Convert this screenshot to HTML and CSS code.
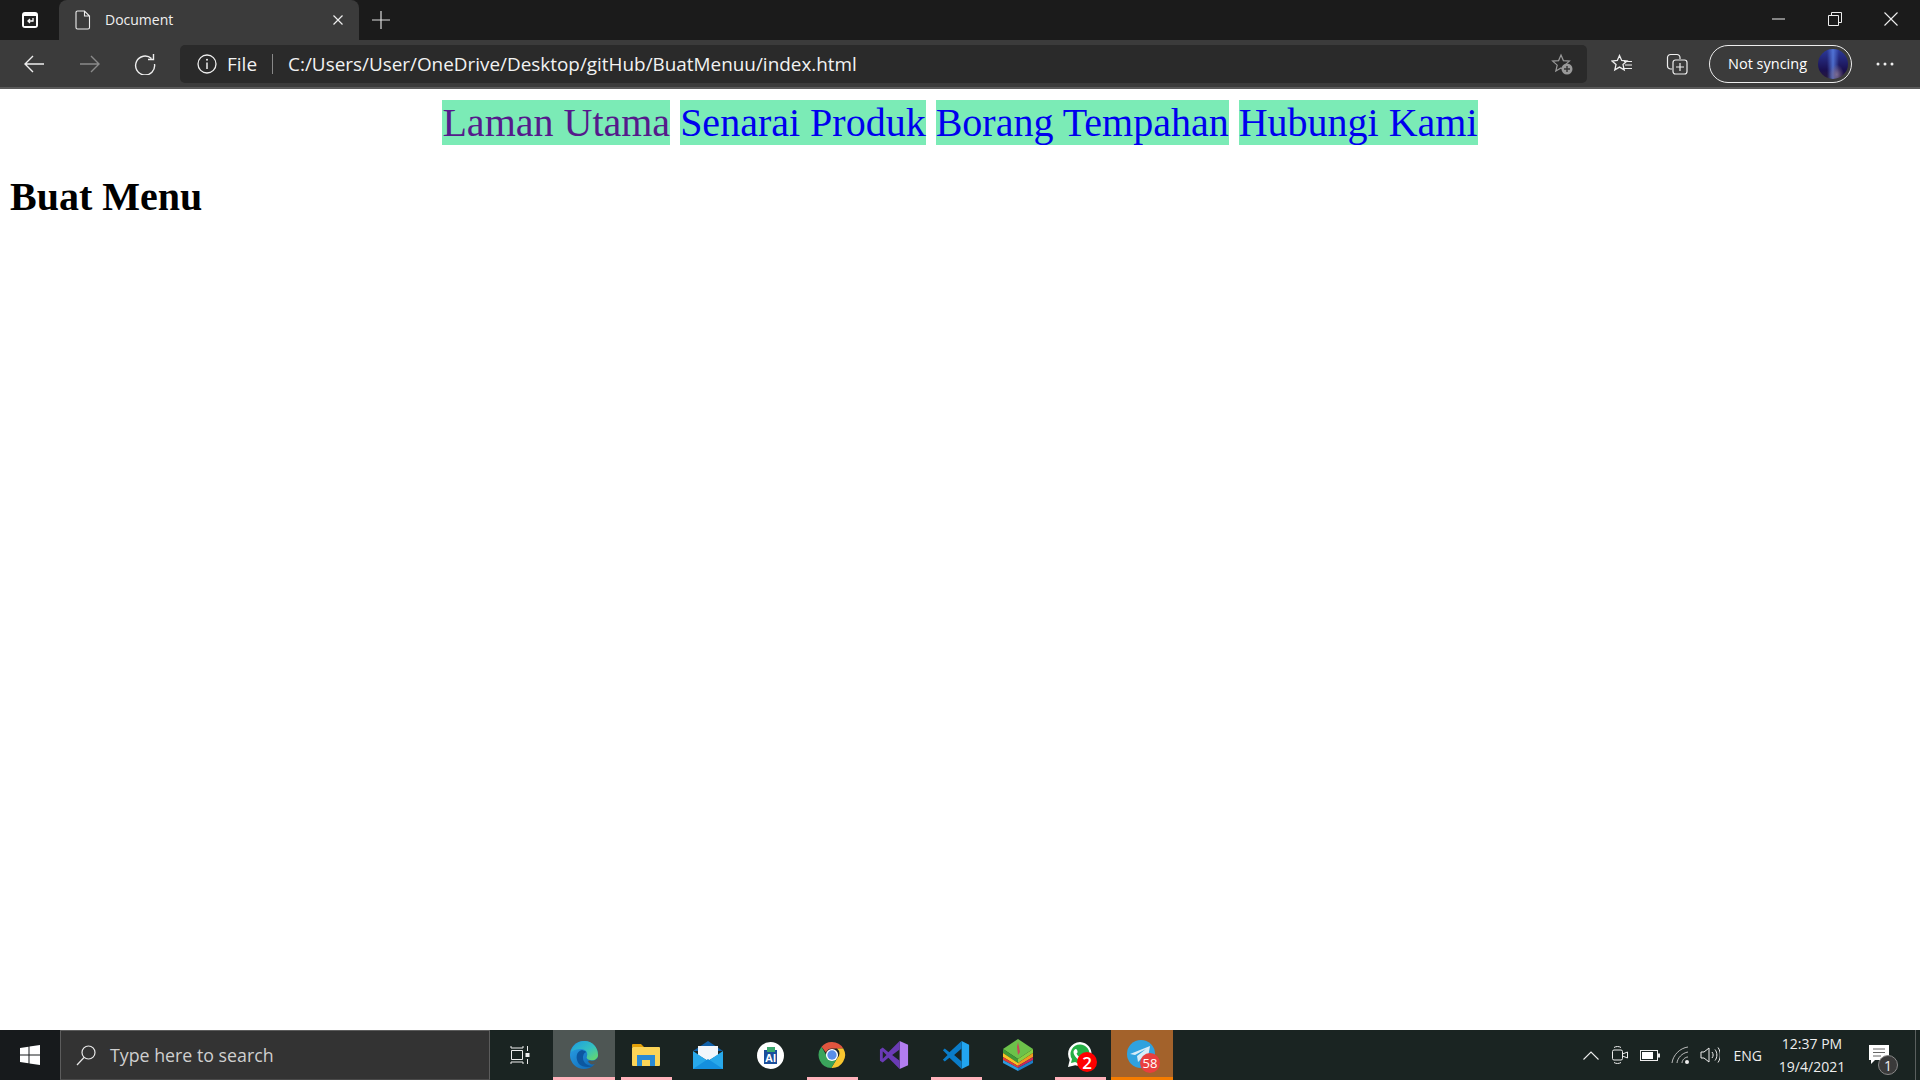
FILE: index.html
```html
<!DOCTYPE html>
<html>
<head>
    <title>Document</title>
    <link rel="stylesheet" href="styles.css">
</head>
<body>
    <div class="browser">
        <div class="tabstrip">
            <div class="tab-actions">
                <svg width="20" height="20" viewBox="0 0 20 20"><rect x="2" y="2" width="16" height="16" rx="3" fill="#fff"/><rect x="4" y="6" width="12" height="10" fill="#222"/><path d="M13 8v3H8M10 9l-2 2 2 2" fill="none" stroke="#fff" stroke-width="1.3"/></svg>
            </div>
            <div class="tab">
                <svg class="tab-icon" width="16" height="20" viewBox="0 0 16 20"><path d="M2.5 1h7l5 5v11.500a1.500 1.500 0 0 1-1.500 1.500H2.500A1.500 1.500 0 0 1 1 17.500V2.500A1.500 1.500 0 0 1 2.500 1zM9.500 1v5h5" fill="none" stroke="#eee" stroke-width="1.1"/></svg>
                <span class="tab-title">Document</span>
                <svg width="12" height="12" viewBox="0 0 12 12"><path d="M1.500 1.500l9 9M10.500 1.500l-9 9" stroke="#eee" stroke-width="1.2"/></svg>
            </div>
            <svg class="new-tab" width="18" height="18" viewBox="0 0 18 18"><path d="M9 0v18M0 9h18" stroke="#ddd" stroke-width="1.2"/></svg>
            <div class="window-controls">
                <svg width="14" height="14" viewBox="0 0 14 14"><path d="M0 7h13" stroke="#eee" stroke-width="1"/></svg>
                <svg width="14" height="14" viewBox="0 0 14 14"><path d="M.5 3.500h10v10H.5zM3.500 3.500v-3h10v10h-3" fill="none" stroke="#eee" stroke-width="1"/></svg>
                <svg width="14" height="14" viewBox="0 0 14 14"><path d="M.5.500l13 13M13.500.500l-13 13" stroke="#eee" stroke-width="1.1"/></svg>
            </div>
        </div>

        <div class="toolbar">
            <svg class="nav-icon" width="22" height="20" viewBox="0 0 22 20"><path d="M21 10H2M10 2l-8 8 8 8" fill="none" stroke="#eee" stroke-width="1.4"/></svg>
            <svg class="nav-icon" width="22" height="20" viewBox="0 0 22 20"><path d="M1 10h19M12 2l8 8-8 8" fill="none" stroke="#8a8a8a" stroke-width="1.4"/></svg>
            <svg class="nav-icon nav-refresh" width="22" height="22" viewBox="0 0 22 22"><path d="M17.500 5.500A9.500 9.500 0 1 0 20.500 11M19.500 1v5.500H14" fill="none" stroke="#eee" stroke-width="1.4"/></svg>
            <div class="address">
                <svg width="20" height="20" viewBox="0 0 20 20"><circle cx="10" cy="10" r="9" fill="none" stroke="#eee" stroke-width="1.3"/><path d="M10 8.500V15" stroke="#eee" stroke-width="1.5"/><circle cx="10" cy="5.800" r="1" fill="#eee"/></svg>
                <span class="scheme">File</span>
                <span class="divider"></span>
                <span class="url">C:/Users/User/OneDrive/Desktop/gitHub/BuatMenuu/index.html</span>
                <svg class="star-add" width="22" height="22" viewBox="0 0 22 22"><path d="M10 2l2.400 5.600 6 .5-4.600 4 1.400 5.900L10 15l-5.200 3 1.400-5.900-4.600-4 6-.5z" fill="none" stroke="#999" stroke-width="1.2"/><circle cx="16" cy="16" r="5.500" fill="#999"/><path d="M16 13v6M13 16h6" stroke="#333" stroke-width="1.4"/></svg>
            </div>
            <svg class="fav-icon" width="22" height="20" viewBox="0 0 22 20"><path d="M8.500 1.500l2.200 5 5.300.5-4 3.600 1.200 5.300-4.700-2.800-4.700 2.800 1.200-5.300-4-3.600 5.300-.5z" fill="none" stroke="#eee" stroke-width="1.3"/><path d="M13 7.500h8M14 11h7M13 14.500h8" stroke="#eee" stroke-width="1.2"/></svg>
            <svg class="coll-icon" width="22" height="22" viewBox="0 0 22 22"><path d="M6 16H4.500a3 3 0 0 1-3-3V4.500a3 3 0 0 1 3-3H11a3 3 0 0 1 3 3V6" fill="none" stroke="#eee" stroke-width="1.2"/><rect x="7" y="7" width="14" height="14" rx="2.500" fill="none" stroke="#eee" stroke-width="1.2"/><path d="M14 10v8M10 14h8" stroke="#eee" stroke-width="1.2"/></svg>
            <div class="sync-pill">
                <span class="sync-label">Not syncing</span>
                <span class="avatar"></span>
            </div>
            <svg class="more-icon" width="18" height="6" viewBox="0 0 18 6"><circle cx="2" cy="3" r="1.500" fill="#eee"/><circle cx="9" cy="3" r="1.500" fill="#eee"/><circle cx="16" cy="3" r="1.500" fill="#eee"/></svg>
        </div>
    </div>

    <div class="page">
        <div class="menu">
            <a href="#" class="visited">Laman Utama</a>
            <a href="#">Senarai Produk</a>
            <a href="#">Borang Tempahan</a>
            <a href="#">Hubungi Kami</a>
        </div>
        <h1>Buat Menu</h1>
    </div>

    <div class="taskbar">
        <div class="start">
            <svg width="20" height="20" viewBox="0 0 20 20"><path d="M0 3l8.500-1.200V9.500H0zM9.500 1.600L20 0v9.500H9.500zM0 10.500h8.500v7.700L0 17zM9.500 10.500H20V20L9.500 18.400z" fill="#fff"/></svg>
        </div>
        <div class="search">
            <svg width="22" height="22" viewBox="0 0 22 22"><circle cx="13.500" cy="8.500" r="6.500" fill="none" stroke="#e8e8e8" stroke-width="1.2"/><path d="M9 13.500L2 21" stroke="#e8e8e8" stroke-width="1.2"/></svg>
            <span>Type here to search</span>
        </div>
        <div class="task-cell task-view">
            <svg width="20" height="20" viewBox="0 0 20 20"><path d="M1 1v2h12V1M1 19v-2h12v2M1.500 5.500h11v9h-11zM17.500 1v5M17.500 14v5" fill="none" stroke="#eee" stroke-width="1"/><rect x="15.500" y="8" width="4" height="4" fill="#eee"/></svg>
        </div>
        <div class="task-cell running active">
            <svg width="30" height="30" viewBox="0 0 30 30"><defs><linearGradient id="edgeBody" x1="0" y1="0" x2="1" y2="1"><stop offset="0" stop-color="#2aa3e8"/><stop offset="1" stop-color="#0d62b0"/></linearGradient><linearGradient id="edgeWave" x1="0" y1="0" x2="1" y2="1"><stop offset="0" stop-color="#1b9de2"/><stop offset=".55" stop-color="#35c1c0"/><stop offset="1" stop-color="#6edb5f"/></linearGradient></defs><circle cx="15" cy="15" r="14" fill="url(#edgeBody)"/><path d="M29 15c0 4.500-4 6.500-8 5.500l-2 .5c1 3 4 4 7 3 2-2.500 3-6 3-9z" fill="#4e5654"/><path d="M13 10c-6 1-7 9-3 14 3 3 9 4 14 2-5 0-10-3-10-8 0-4 2-6 4-6z" fill="#0c57a0"/><path d="M2 12C4 5 9 1 15.500 1 23 1 29 7 29 15c0 4-4 6-8 5-3-.5-4-2-3-4 1-3-1-7-6-7-4 0-8 1-10 3z" fill="url(#edgeWave)"/></svg>
        </div>
        <div class="task-cell running">
            <svg width="28" height="24" viewBox="0 0 28 24"><path d="M0 2a1 1 0 0 1 1-1h8l3 3H0z" fill="#e3a008"/><rect x="0" y="4" width="28" height="19" rx="1" fill="#fcd457"/><path d="M5 23v-11h18v11h-5v-6h-8v6z" fill="#2a8ad4"/></svg>
        </div>
        <div class="task-cell">
            <svg width="30" height="28" viewBox="0 0 30 28"><path d="M15 0l15 10H0z" fill="#0f5fa8"/><path d="M5 5h20v9l-10 6-10-6z" fill="#f2f6fb"/><path d="M0 10l15 10 15-10v18H0z" fill="#28a8ea"/><path d="M0 28l15-10 15 10z" fill="#1490df"/></svg>
        </div>
        <div class="task-cell">
            <svg width="27" height="27" viewBox="0 0 27 27"><circle cx="13.500" cy="13.500" r="13.500" fill="#fff"/><path d="M7 8h13v14H7z" fill="#1b4f9c"/><path d="M10 5h8v5h-8z" fill="#3aa76d"/><text x="13.500" y="20" text-anchor="middle" font-family="Liberation Sans" font-size="11" font-weight="700" fill="#fff">AI</text></svg>
        </div>
        <div class="task-cell running">
            <svg width="28" height="28" viewBox="0 0 30 30"><path d="M15 1a14 14 0 0 1 12.100 7H15a7 7 0 0 0-6.500 4.400L3.800 6.200A14 14 0 0 1 15 1z" fill="#e0553f"/><path d="M27.100 8a14 14 0 0 1-12.900 21l6.100-10a7 7 0 0 0 .1-11z" fill="#f8c62f"/><path d="M14.200 29A14 14 0 0 1 3.800 6.200l5.900 10.300a7 7 0 0 0 10.600 2.500z" fill="#3aa45b"/><circle cx="15" cy="15" r="6.500" fill="#fff"/><circle cx="15" cy="15" r="5" fill="#5a8ee8"/></svg>
        </div>
        <div class="task-cell">
            <svg width="30" height="30" viewBox="0 0 30 32"><path d="M21 1l9 4v22l-9 4z" fill="#b27df0"/><path d="M21 1L9 13 3 8 0 10v12l3 2 6-5 12 12v-9l-8-6 8-6zM3 12v8l4-4z" fill="#6a3bb5" fill-rule="evenodd"/></svg>
        </div>
        <div class="task-cell running">
            <svg width="30" height="30" viewBox="0 0 30 32"><path d="M21 1l8 4v22l-8 4z" fill="#22a5f0"/><path d="M21 1L8 13 3 9 1 11l5 5-5 5 2 2 5-4 13 12v-8l-8-7 8-7z" fill="#0a7cc9"/></svg>
        </div>
        <div class="task-cell">
            <svg width="30" height="32" viewBox="0 0 30 32"><path d="M15 0l15 10-15 10L0 10z" fill="#6cc24a"/><path d="M15 3l2 10-2 3-1-8z" fill="#c9485a"/><path d="M0 10l15 10v4L0 14z" fill="#3f9a36"/><path d="M30 10L15 20v4l15-10z" fill="#8bcf3f"/><path d="M0 14l15 10v3L0 18z" fill="#f7c325"/><path d="M30 14L15 24v3l15-9z" fill="#f29a1f"/><path d="M0 18l15 9v2L0 21z" fill="#e23b3b"/><path d="M30 18l-15 9v2l15-8z" fill="#c9285a"/><path d="M0 21l15 8v3L0 24z" fill="#2e9be0"/><path d="M30 21l-15 8v3l15-8z" fill="#1c7ec7"/></svg>
        </div>
        <div class="task-cell running">
            <span class="tile">
                <svg width="28" height="30" viewBox="0 0 28 30"><path d="M14 2a12 12 0 0 0-10.300 18L2 27l7.200-1.800A12 12 0 1 0 14 2z" fill="#fff"/><path d="M14 4.500a9.500 9.500 0 0 0-8 14.600l-1 4 4.100-1A9.500 9.500 0 1 0 14 4.500z" fill="#25b045"/><path d="M10 9c1 0 2 3 1.500 3.500l-1 1c1 2 2.500 3.500 4.500 4.500l1-1c.5-.5 3.500.5 3.500 1.500 0 2-2 2.500-3 2.500-4 0-9-5-9-9 0-1 1-3 2.500-3z" fill="#fff"/></svg>
                <span class="count count-red">2</span>
            </span>
        </div>
        <div class="task-cell telegram">
            <span class="tile">
                <svg width="30" height="30" viewBox="0 0 30 30"><circle cx="14" cy="14" r="14" fill="#2fa2df"/><path d="M3 14l20-8-3 17-6-4-3 3-1-6 9-7-11 6z" fill="#d7ecf8"/></svg>
                <span class="count count-orange">58</span>
            </span>
        </div>

        <div class="tray">
            <svg class="tray-up" width="16" height="9" viewBox="0 0 16 9"><path d="M.5 8.500L8 1l7.500 7.500" fill="none" stroke="#eee" stroke-width="1.1"/></svg>
            <svg class="tray-meet" width="16" height="20" viewBox="0 0 16 20"><rect x=".5" y="5" width="10" height="10" rx="1.500" fill="none" stroke="#eee"/><path d="M10.500 9l5-2v6l-5-2M2 2.500c2-1.300 5-1.300 7 0M2 17.500c2 1.300 5 1.300 7 0" fill="none" stroke="#eee"/></svg>
            <svg class="tray-battery" width="20" height="11" viewBox="0 0 20 11"><rect x=".5" y=".5" width="17" height="10" fill="none" stroke="#eee"/><rect x="2" y="2" width="11" height="7" fill="#fff"/><rect x="18" y="3.500" width="2" height="4" fill="#eee"/></svg>
            <svg class="tray-wifi" width="20" height="18" viewBox="0 0 20 18"><path d="M1 17C2 9 9 2 17 1M6 17c.5-5 5-10 11-11M11 17c0-3 3-6 6-6" fill="none" stroke="#ccc" stroke-width=".9"/><circle cx="16" cy="16" r="2" fill="#eee"/></svg>
            <svg class="tray-volume" width="20" height="18" viewBox="0 0 20 18"><path d="M1 6h3l5-4v14l-5-4H1zM12 6c1.500 2 1.500 4 0 6M15 3.500c2.500 3 2.500 8 0 11M18 1.500c3 4 3 11 0 15" fill="none" stroke="#eee"/></svg>
            <span class="tray-lang">ENG</span>
            <div class="clock">
                <span>12:37 PM</span>
                <span>19/4/2021</span>
            </div>
            <span class="notify">
                <svg width="20" height="20" viewBox="0 0 20 20"><path d="M0 0h20v15H6l-4 4v-4H0z" fill="#fff"/><path d="M4 4h12M4 7.500h12M4 11h8" stroke="#666"/></svg>
                <span class="notify-count">1</span>
            </span>
            <span class="show-desktop"></span>
        </div>
    </div>
</body>
</html>
```

FILE: styles.css
```css
:root {
    --chrome-dark: #1b1b1b;
    --chrome: #3b3b3b;
    --address-bg: #2a2a2a;
    --taskbar-bg: #1a2422;
    --mint: #7bebb6;
}

body {
    margin: 0;
    height: 1080px;
    overflow: hidden;
    display: flex;
    flex-direction: column;
    background: #fff;
}

svg {
    display: block;
    flex: none;
}

/* browser frame */
.browser {
    height: 89px;
    flex: none;
    font-family: "Open Sans", "Noto Sans", sans-serif;
    color: #fff;
}

.tabstrip {
    height: 40px;
    display: flex;
    align-items: center;
    background: var(--chrome-dark);
}

.tab-actions {
    width: 59px;
    display: flex;
    justify-content: center;
}

.tab {
    width: 300px;
    height: 40px;
    box-sizing: border-box;
    padding: 0 15px 0 16px;
    display: flex;
    align-items: center;
    background: var(--chrome);
    border-radius: 8px 8px 0 0;
}

.tab-title {
    flex: 1;
    margin-left: 14px;
    padding-bottom: 2px;
    font-size: 14px;
    color: #f0f0f0;
}

.new-tab {
    margin-left: 13px;
}

.window-controls {
    margin-left: auto;
    display: flex;
    gap: 42px;
    padding: 0 22px 3px 0;
}

.toolbar {
    height: 46px;
    padding-top: 1px;
    display: flex;
    align-items: center;
    background: var(--chrome);
    border-bottom: 2px solid #5a5a5a;
}

.nav-icon {
    margin-left: 23px;
    margin-right: 11px;
}

.nav-refresh {
    margin-left: 22px;
    margin-right: 12px;
}

.address {
    width: 1407px;
    height: 38px;
    margin-left: 12px;
    box-sizing: border-box;
    padding: 0 14px 0 17px;
    display: flex;
    align-items: center;
    background: var(--address-bg);
    border-radius: 5px;
    font-size: 19px;
    color: #f2f2f2;
}

.scheme {
    margin-left: 10px;
}

.divider {
    width: 1px;
    height: 20px;
    margin: 0 15px;
    background: #888;
}

.url {
    flex: 1;
    font-size: 18.9px;
    white-space: nowrap;
}

.fav-icon {
    margin-left: 24px;
}

.coll-icon {
    margin-left: 33px;
}

.sync-pill {
    width: 143px;
    height: 38px;
    margin-left: 21px;
    box-sizing: border-box;
    padding: 0 3px 0 18px;
    display: flex;
    align-items: center;
    justify-content: space-between;
    border: 1px solid #eee;
    border-radius: 19px;
    font-size: 14.5px;
}

.sync-label {
    padding-bottom: 2px;
}

.avatar {
    width: 30px;
    height: 30px;
    border-radius: 50%;
    background:
        radial-gradient(ellipse at 62% 85%, #7a6a90 0, transparent 28%),
        linear-gradient(90deg, transparent 30%, rgba(90, 130, 230, .8) 50%, transparent 70%),
        linear-gradient(#2c3a9c, #1a1050 70%, #2a1a3a);
}

.more-icon {
    margin-left: 24px;
}

/* page content */
.page {
    flex: 1;
    padding: 8px;
    font-family: "Liberation Serif", "Times New Roman", serif;
    color: #000;
}

.menu {
    margin-top: 2px;
    text-align: center;
    font-size: 40px;
}

.menu a {
    background: var(--mint);
    color: #0000ee;
    text-decoration: none;
}

.menu a.visited {
    color: #551a8b;
}

h1 {
    margin: 27px 0 21px 2px;
    font-size: 40px;
}

/* windows taskbar */
.taskbar {
    height: 50px;
    flex: none;
    display: flex;
    background: var(--taskbar-bg);
    font-family: "Open Sans", "Noto Sans", sans-serif;
    color: #eee;
}

.start {
    width: 60px;
    display: flex;
    align-items: center;
    justify-content: center;
    background: #171a1c;
}

.search {
    width: 430px;
    box-sizing: border-box;
    padding-left: 14px;
    display: flex;
    align-items: center;
    gap: 13px;
    background: #333;
    border: 1px solid #5c5c5c;
    border-bottom-color: #4a4a4a;
    font-size: 17.8px;
    color: #cfcfcf;
}

.task-cell {
    width: 62px;
    box-sizing: border-box;
    display: flex;
    align-items: center;
    justify-content: center;
    position: relative;
}

.task-view {
    width: 63px;
    padding-right: 4px;
}

.running::after {
    content: "";
    position: absolute;
    left: 6px;
    right: 5px;
    bottom: 0;
    height: 3px;
    background: #ffb2bb;
}

.active {
    background: #4e5654;
}

.active::after {
    left: 0;
    right: 0;
}

.telegram {
    background: #a3622b;
    border-bottom: 3px solid #f57c00;
}

.tile {
    position: relative;
    display: block;
}

.telegram .tile {
    margin-top: 3px;
}

.count {
    position: absolute;
    display: flex;
    align-items: center;
    justify-content: center;
    border-radius: 50%;
    color: #fff;
}

.count-red {
    right: -3px;
    bottom: -2px;
    width: 20px;
    height: 20px;
    background: #f00;
    font-size: 17px;
    font-weight: 600;
}

.count-orange {
    right: -3px;
    bottom: -3px;
    width: 20px;
    height: 20px;
    background: #e93e3e;
    font-size: 13px;
}

.tray {
    flex: 1;
    display: flex;
    align-items: center;
    justify-content: flex-end;
}

.tray-meet {
    margin-left: 13px;
}

.tray-battery {
    margin-left: 12px;
}

.tray-wifi {
    margin-left: 11px;
}

.tray-volume {
    margin-left: 9px;
}

.tray-lang {
    margin-left: 14px;
    font-size: 14px;
}

.clock {
    width: 76px;
    margin-left: 12px;
    display: flex;
    flex-direction: column;
    align-items: center;
    font-size: 14px;
    line-height: 23px;
}

.notify {
    position: relative;
    margin: 0 26px 0 19px;
}

.notify-count {
    position: absolute;
    right: -9px;
    bottom: -10px;
    width: 20px;
    height: 20px;
    box-sizing: border-box;
    display: flex;
    align-items: center;
    justify-content: center;
    background: #3a3a3a;
    border: 1px solid #888;
    border-radius: 50%;
    font-size: 14px;
}

.show-desktop {
    width: 5px;
    height: 50px;
    box-sizing: border-box;
    border-left: 1px solid #5a5f5e;
}
```
